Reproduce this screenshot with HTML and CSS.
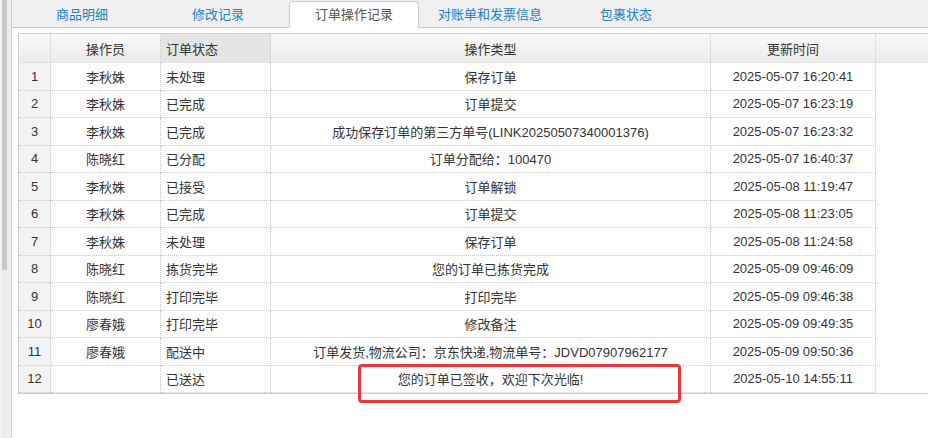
FILE: index.html
```html
<!DOCTYPE html>
<html lang="zh-CN">
<head>
    <meta charset="UTF-8">
    <title>订单操作记录</title>
    <link rel="stylesheet" href="styles.css">
</head>
<body>
    <div class="page">
        <!-- faixa de rolagem da esquerda -->
        <div class="gutter">
            <div class="gutter-thumb"></div>
        </div>

        <div class="panel">
            <ul class="tabs">
                <li class="tab">商品明细</li>
                <li class="tab">修改记录</li>
                <li class="tab active">订单操作记录</li>
                <li class="tab">对账单和发票信息</li>
                <li class="tab">包裹状态</li>
            </ul>

            <div class="grid-wrap">
                <table class="grid">
                    <colgroup>
                        <col class="c-num">
                        <col class="c-user">
                        <col class="c-status">
                        <col class="c-type">
                        <col class="c-time">
                        <col>
                    </colgroup>
                    <thead>
                        <tr>
                            <th></th>
                            <th>操作员</th>
                            <th class="sorted left">订单状态</th>
                            <th>操作类型</th>
                            <th>更新时间</th>
                            <th class="filler"></th>
                        </tr>
                    </thead>
                    <tbody>
                        <tr><td class="num">1</td><td>李秋姝</td><td class="left">未处理</td><td>保存订单</td><td>2025-05-07 16:20:41</td><td class="filler"></td></tr>
                        <tr><td class="num">2</td><td>李秋姝</td><td class="left">已完成</td><td>订单提交</td><td>2025-05-07 16:23:19</td><td class="filler"></td></tr>
                        <tr><td class="num">3</td><td>李秋姝</td><td class="left">已完成</td><td>成功保存订单的第三方单号(LINK20250507340001376)</td><td>2025-05-07 16:23:32</td><td class="filler"></td></tr>
                        <tr><td class="num">4</td><td>陈晓红</td><td class="left">已分配</td><td>订单分配给：100470</td><td>2025-05-07 16:40:37</td><td class="filler"></td></tr>
                        <tr><td class="num">5</td><td>李秋姝</td><td class="left">已接受</td><td>订单解锁</td><td>2025-05-08 11:19:47</td><td class="filler"></td></tr>
                        <tr><td class="num">6</td><td>李秋姝</td><td class="left">已完成</td><td>订单提交</td><td>2025-05-08 11:23:05</td><td class="filler"></td></tr>
                        <tr><td class="num">7</td><td>李秋姝</td><td class="left">未处理</td><td>保存订单</td><td>2025-05-08 11:24:58</td><td class="filler"></td></tr>
                        <tr><td class="num">8</td><td>陈晓红</td><td class="left">拣货完毕</td><td>您的订单已拣货完成</td><td>2025-05-09 09:46:09</td><td class="filler"></td></tr>
                        <tr><td class="num">9</td><td>陈晓红</td><td class="left">打印完毕</td><td>打印完毕</td><td>2025-05-09 09:46:38</td><td class="filler"></td></tr>
                        <tr><td class="num">10</td><td>廖春娥</td><td class="left">打印完毕</td><td>修改备注</td><td>2025-05-09 09:49:35</td><td class="filler"></td></tr>
                        <tr><td class="num">11</td><td>廖春娥</td><td class="left">配送中</td><td>订单发货,物流公司：京东快递,物流单号：JDVD07907962177</td><td>2025-05-09 09:50:36</td><td class="filler"></td></tr>
                        <tr><td class="num">12</td><td></td><td class="left">已送达</td><td>您的订单已签收，欢迎下次光临!</td><td>2025-05-10 14:55:11</td><td class="filler"></td></tr>
                    </tbody>
                </table>
            </div>
        </div>

        <!-- destaque vermelho -->
        <div class="highlight"></div>
    </div>
</body>
</html>
```

FILE: styles.css
```css
* {
    margin: 0;
    padding: 0;
    box-sizing: border-box;
}

body {
    background: #fff;
    font-family: 'Liberation Sans', 'Noto Sans CJK SC', sans-serif;
    font-size: 13px;
    color: #333;
    overflow: hidden;
}

.page {
    display: flex;
    height: 100vh;
    position: relative;
    overflow: hidden;
}

/* Gutter */
.gutter {
    width: 11px;
    flex-shrink: 0;
    background-color: #ededed;
    border-left: 2px solid #f3f3f3;
}

.gutter-thumb {
    width: 5px;
    height: 270px;
    background-color: #c9c9c9;
}

/* Panel */
.panel {
    flex-grow: 1;
    border-left: 1px solid #cfcfcf;
    min-width: 0;
}

.tabs {
    list-style: none;
    display: flex;
    gap: 6px;
    height: 28px;
    padding: 1px 0 0 5px;
    background-color: #f0f0f0;
    border-bottom: 1px solid #cccccc;
}

.tab {
    width: 130px;
    height: 27px;
    line-height: 25px;
    text-align: center;
    color: #2380c3;
    border: 1px solid transparent;
    border-bottom: 0;
    white-space: nowrap;
}

.tab.active {
    background-color: #fff;
    color: #555;
    border-color: #cccccc;
    border-radius: 4px 4px 0 0;
}

/* Grid */
.grid-wrap {
    padding: 5px 0 0 6px;
}

.grid {
    width: 940px;
    table-layout: fixed;
    border-collapse: separate;
    border-spacing: 0;
    border-top: 1px solid #cfcfcf;
    border-left: 1px solid #cfcfcf;
    border-bottom: 1px solid #cfcfcf;
}

.c-num { width: 32px; }
.c-user { width: 110px; }
.c-status { width: 110px; }
.c-type { width: 440px; }
.c-time { width: 165px; }

.grid th {
    height: 29px;
    font-weight: normal;
    text-align: center;
    color: #333;
    background: linear-gradient(#fafafa, #ececec);
    border-right: 1px dotted #c8c8c8;
    border-bottom: 1px solid #e2e2e2;
    white-space: nowrap;
}

.grid th.sorted {
    background: #e5e5e5;
}

.grid th.filler {
    border-right: 0;
}

.grid td {
    height: 27.5px;
    text-align: center;
    border-right: 1px dotted #c8c8c8;
    border-bottom: 1px dotted #c8c8c8;
    white-space: nowrap;
    overflow: hidden;
}

.grid .left {
    text-align: left;
    padding-left: 5px;
}

.grid td.num {
    background-color: #f3f3f3;
}

.grid td.filler {
    border-right: 0;
    border-bottom: 0;
}

/* Destaque */
.highlight {
    position: absolute;
    left: 358px;
    top: 364px;
    width: 323px;
    height: 39px;
    border: 3px solid #e8383d;
    border-radius: 4px;
}
```
